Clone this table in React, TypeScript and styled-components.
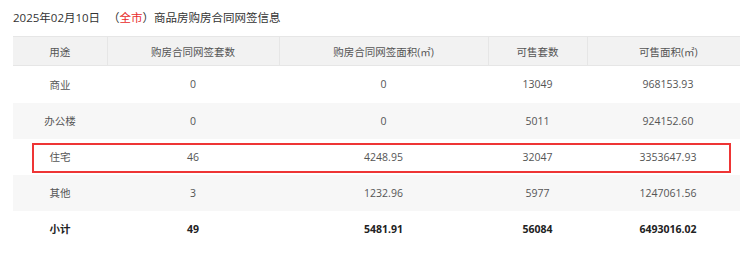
import { createGlobalStyle, styled } from 'styled-components'

const GlobalStyle = createGlobalStyle`
  html, body {
    margin: 0;
    padding: 0;
    background: #fff;
  }
  body {
    font-family: "Open Sans", "Noto Sans CJK SC", sans-serif;
  }
`

const Page = styled.div`
  padding: 0 0 0 13px;
  width: 740px;
  box-sizing: border-box;
  overflow: hidden;
`

const Title = styled.div`
  height: 36px;
  display: flex;
  align-items: center;
  font-size: 11.5px;
  color: #333;
  padding-bottom: 3px;
  box-sizing: border-box;
`

const City = styled.span`
  margin-left: 8px;
  color: #e82b2b;
  &::before {
    content: '（';
    color: #333;
  }
  &::after {
    content: '）';
    color: #333;
  }
`

const TableWrap = styled.div`
  position: relative;
  width: 736px;
`

const Table = styled.table`
  width: 736px;
  border-collapse: collapse;
  table-layout: fixed;
  font-size: 10.5px;
  color: #555;
`

const Th = styled.th`
  height: 28px;
  padding: 0;
  font-weight: normal;
  background: #f2f2f2;
  border-top: 1px solid #e6e6e6;
  border-bottom: 1px solid #e6e6e6;
  border-left: 1px solid #e6e6e6;
  text-align: center;
  &:first-child {
    border-left: none;
  }
`

const Row = styled.tr<{ $striped?: boolean; $total?: boolean }>`
  height: 36px;
  background: ${p => (p.$striped ? '#f7f7f7' : '#fff')};
  color: ${p => (p.$total ? '#222' : '#555')};
  font-weight: ${p => (p.$total ? 'bold' : 'normal')};
  &:first-child {
    height: 37px;
  }
`

const Td = styled.td`
  padding: 0;
  text-align: center;
`

// header 30px, first body row 37px, the rest 36px
const Highlight = styled.div<{ $index: number }>`
  position: absolute;
  left: 19px;
  width: 699px;
  height: 30px;
  box-sizing: border-box;
  border: 2px solid #ee3535;
  pointer-events: none;
  top: ${p => 30 + (p.$index === 0 ? 0 : 37 + (p.$index - 1) * 36) + 4}px;
`

const columns = ['用途', '购房合同网签套数', '购房合同网签面积(㎡)', '可售套数', '可售面积(㎡)']
const widths = [94, 172, 209, 99, 162]

const rows = [
  ['商业', '0', '0', '13049', '968153.93'],
  ['办公楼', '0', '0', '5011', '924152.60'],
  ['住宅', '46', '4248.95', '32047', '3353647.93'],
  ['其他', '3', '1232.96', '5977', '1247061.56'],
]

const total = ['小计', '49', '5481.91', '56084', '6493016.02']

export default function App() {
  const highlighted = rows.findIndex(r => r[0] === '住宅')

  return (
    <Page>
      <GlobalStyle />
      <Title>
        2025年02月10日
        <City>全市</City>
        商品房购房合同网签信息
      </Title>
      <TableWrap>
        <Table>
          <colgroup>
            {widths.map((w, i) => (
              <col key={i} style={{ width: w }} />
            ))}
          </colgroup>
          <thead>
            <tr>
              {columns.map(c => (
                <Th key={c}>{c}</Th>
              ))}
            </tr>
          </thead>
          <tbody>
            {rows.map((r, i) => (
              <Row key={r[0]} $striped={i % 2 === 1}>
                {r.map((v, j) => (
                  <Td key={j}>{v}</Td>
                ))}
              </Row>
            ))}
            <Row $total>
              {total.map((v, j) => (
                <Td key={j}>{v}</Td>
              ))}
            </Row>
          </tbody>
        </Table>
        <Highlight $index={highlighted} />
      </TableWrap>
    </Page>
  )
}
